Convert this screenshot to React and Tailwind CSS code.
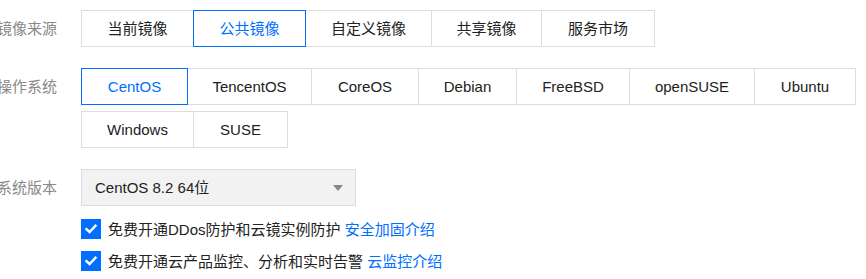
import React from "react";

const SOURCES = [
  { name: "当前镜像", w: "w-[113px]" },
  { name: "公共镜像", w: "w-[113px]", active: true },
  { name: "自定义镜像", w: "w-[127px]" },
  { name: "共享镜像", w: "w-[111px]" },
  { name: "服务市场", w: "w-[114px]" },
];

const OS_ROW1 = [
  { name: "CentOS", w: "w-[107px]", active: true },
  { name: "TencentOS", w: "w-[125px]" },
  { name: "CoreOS", w: "w-[108px]" },
  { name: "Debian", w: "w-[99px]" },
  { name: "FreeBSD", w: "w-[114px]" },
  { name: "openSUSE", w: "w-[126px]" },
  { name: "Ubuntu", w: "w-[102px]" },
];

const OS_ROW2 = [
  { name: "Windows", w: "w-[113px]" },
  { name: "SUSE", w: "w-[95px]" },
];

function Label({ children }) {
  return (
    <div className="-ml-[3px] w-[84px] shrink-0 h-[37px] flex items-center text-[#888888]">
      {children}
    </div>
  );
}

function Segmented({ items }) {
  return (
    <div className="flex">
      {items.map((it, i) => (
        <button
          key={it.name}
          className={`${it.w} ${i > 0 ? "-ml-px" : ""} h-[37px] flex items-center justify-center border bg-white ${
            it.active
              ? "relative z-10 border-[#006eff] text-[#006eff]"
              : "border-[#dddddd] text-[#222222]"
          }`}
        >
          {it.name}
        </button>
      ))}
    </div>
  );
}

function Check({ children, link }) {
  return (
    <label className="flex items-center h-[20px]">
      <span className="w-[20px] h-[20px] bg-[#006eff] flex items-center justify-center shrink-0">
        <svg width="14" height="14" viewBox="0 0 14 14" fill="none">
          <path d="M2.5 7.2 L5.6 10 L11.5 3.8" stroke="#fff" strokeWidth="2.4" strokeLinecap="square" />
        </svg>
      </span>
      <span className="ml-[7px] text-[#222222]">
        {children} <span className="text-[#006eff]">{link}</span>
      </span>
    </label>
  );
}

export default function App() {
  return (
    <div
      className="w-[866px] h-[279px] overflow-hidden bg-white pt-[10px] text-[15px] leading-none"
      style={{ fontFamily: '"Liberation Sans", "Noto Sans CJK SC", sans-serif' }}
    >
      {/* 镜像来源 */}
      <div className="flex">
        <Label>镜像来源</Label>
        <Segmented items={SOURCES} />
      </div>

      {/* 操作系统 */}
      <div className="flex mt-[21px]">
        <Label>操作系统</Label>
        <div className="flex flex-col gap-[6px]">
          <Segmented items={OS_ROW1} />
          <Segmented items={OS_ROW2} />
        </div>
      </div>

      {/* 系统版本 */}
      <div className="flex mt-[21px]">
        <Label>系统版本</Label>
        <div className="w-[275px] h-[37px] bg-[#f2f2f2] border border-[#dddddd] flex items-center justify-between pl-[13px] pr-[12px] text-[#222222]">
          <span>CentOS 8.2 64位</span>
          <svg width="10" height="6" viewBox="0 0 10 6">
            <path d="M0 0 H10 L5 6 Z" fill="#888888" />
          </svg>
        </div>
      </div>

      <div className="ml-[81px] mt-[13px] flex flex-col gap-[12px]">
        <Check link="安全加固介绍">免费开通DDos防护和云镜实例防护</Check>
        <Check link="云监控介绍">免费开通云产品监控、分析和实时告警</Check>
      </div>
    </div>
  );
}
